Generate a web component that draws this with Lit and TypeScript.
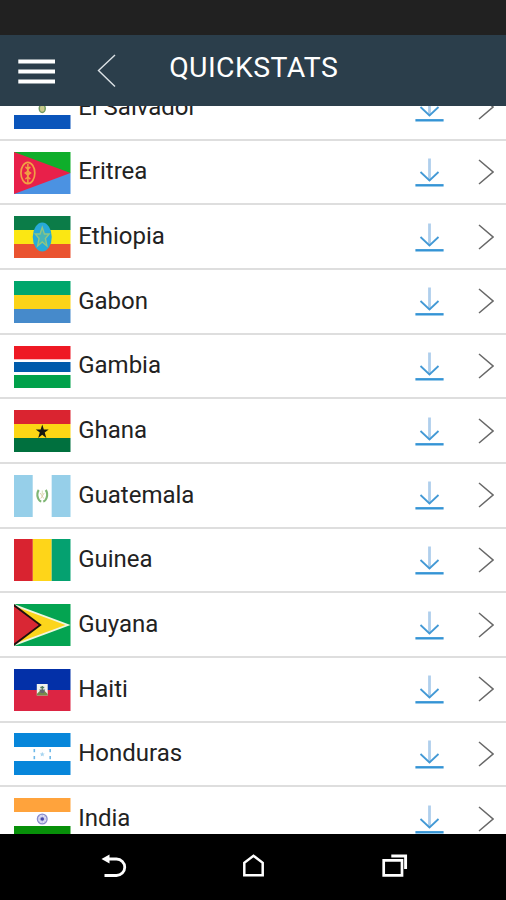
import { LitElement, html, css, svg } from "lit";
import { customElement, property } from "lit/decorators.js";

const r = (x: number, y: number, w: number, h: number, c: string) =>
  svg`<rect x=${x} y=${y} width=${w} height=${h} fill=${c}></rect>`;
const bands = (a: string, b: string, c: string) => svg`${r(0, 0, 57, 14, a)}${r(0, 14, 57, 14, b)}${r(0, 28, 57, 14, c)}`;
const pales = (a: string, b: string, c: string) => svg`${r(0, 0, 19, 42, a)}${r(19, 0, 19, 42, b)}${r(38, 0, 19, 42, c)}`;

const countries = [
  { name: "El Salvador", flag: svg`${bands("#0a55bb", "#fff", "#0a55bb")}
    <ellipse cx="28.5" cy="21.5" rx="3" ry="4" fill="#c9c98a" stroke="#729a62" stroke-width="1.5"></ellipse>` },
  { name: "Eritrea", flag: svg`${r(0, 0, 57, 21, "#0fae2b")}${r(0, 21, 57, 21, "#4b92e2")}
    <path d="M0 0L57 21L0 42Z" fill="#e8204a"></path>
    <g fill="none" stroke="#f2a044" stroke-width="1.7"><ellipse cx="14" cy="21" rx="7" ry="10.7"></ellipse>
    <path d="M14 12v19M11.5 15q5 3 0 6q5 3 0 6M16.5 15q-5 3 0 6q-5 3 0 6" stroke-width="1.5"></path></g>` },
  { name: "Ethiopia", flag: svg`${bands("#0b7c48", "#fbe713", "#ea5330")}
    <ellipse cx="28.5" cy="21" rx="9.6" ry="14.5" fill="#27aad8"></ellipse>
    <path d="M28.5 11.5L30.7 18H35.5L31.7 22.5L33.2 30L28.5 26L23.8 30L25.3 22.5L21.5 18H26.3Z" fill="#48b6b5" stroke="#8fc583" stroke-width="1.4"></path>` },
  { name: "Gabon", flag: bands("#00a66c", "#fbd318", "#468acb") },
  { name: "Gambia", flag: svg`${r(0, 0, 57, 42, "#fff")}${r(0, 0, 57, 13.3, "#ee1924")}${r(0, 16, 57, 10, "#005bab")}${r(0, 29, 57, 13, "#00a14a")}` },
  { name: "Ghana", flag: svg`${bands("#da2430", "#fcd615", "#00703e")}
    <path d="M28.5 14.5L30.1 19.5H35L31 22.5L32.6 28L28.5 24.8L24.4 28L26 22.5L22 19.5H26.9Z" fill="#161910"></path>` },
  { name: "Guatemala", flag: svg`${pales("#96cfe9", "#fff", "#96cfe9")}
    <g fill="none"><path d="M25 15q-2.5 3.5-.8 8q1 3 3.3 3.5M32 15q2.5 3.5.8 8q-1 3-3.3 3.5" stroke="#7fb674" stroke-width="2.2"></path>
    <path d="M26.5 18l3.5 5.5M30.5 18l-3.5 5.5" stroke="#dccfae"></path><path d="M28.5 15.5v4" stroke="#d5dfb2"></path></g>` },
  { name: "Guinea", flag: pales("#d92330", "#fed519", "#05a170") },
  { name: "Guyana", flag: svg`${r(0, 0, 57, 42, "#04a451")}<path d="M0 0L57 21L0 42Z" fill="#eff6df"></path>
    <path d="M0 2L52 21L0 40Z" fill="#fcd51c"></path><path d="M0 0L28 21L0 42Z" fill="#20100e"></path><path d="M0 2.5L25 21L0 39.5Z" fill="#d92734"></path>` },
  { name: "Haiti", flag: svg`${r(0, 0, 57, 21, "#0330a8")}${r(0, 21, 57, 21, "#dc2543")}${r(23, 15, 11, 11.5, "#f1f2ed")}
    <path d="M23 25l3-3h5l3 3v1.5H23Z" fill="#758b4b"></path><path d="M25.5 20.5h6L30 24h-3Z" fill="#666474"></path>
    <path d="M28.5 17v5M26.5 18.5h4" stroke="#4f7960" stroke-width="1.3"></path>` },
  { name: "Honduras", flag: svg`${bands("#0786da", "#fff", "#0786da")}
    <g fill="#7ec0eb">${r(19.7, 16, 1.6, 3.2, "#6db8e8")}${r(19.7, 23, 1.6, 3.2, "#6db8e8")}${r(35.7, 16, 1.6, 3.2, "#6db8e8")}${r(35.7, 23, 1.6, 3.2, "#6db8e8")}
    <path d="M28.5 18.8l.8 1.6 1.7.2-1.3 1.1.4 1.7-1.6-.9-1.6.9.4-1.7-1.3-1.1 1.7-.2Z" fill="#a8d5f0"></path></g>` },
  { name: "India", flag: svg`${bands("#ffa33c", "#fff", "#079009")}
    <circle cx="28.5" cy="21" r="4.9" fill="#dedff2" stroke="#8c8dcc" stroke-width="1.3"></circle>
    <path d="M28.5 17v8M24.5 21h8M25.7 18.2l5.6 5.6M31.3 18.2l-5.6 5.6" stroke="#a9a9dc" stroke-width=".6"></path>
    <circle cx="28.5" cy="21" r="1.8" fill="#4648aa"></circle>` },
];

@customElement("country-row")
class CountryRow extends LitElement {
  @property({ attribute: false }) country!: (typeof countries)[number];
  static styles = css`
    :host { display: flex; align-items: flex-start; box-sizing: border-box; height: 64.67px;
      padding: 10.9px 12.4px 0 14.3px; border-bottom: 2px solid #dedede; background: #fff; }
    svg { display: block; flex: none; }
    .flag { width: 56.5px; height: 42px; }
    .name { flex: 1; margin-left: 7.4px; font-size: 24px; line-height: 28px; margin-top: 5.9px; color: #222; white-space: nowrap; }
    .download { width: 29px; height: 30px; margin: 6.6px 33.6px 0 0; }
    .chevron { width: 16px; height: 28px; margin-top: 6.6px; }
  `;
  render() {
    return html`
      <svg class="flag" viewBox="0 0 57 42" preserveAspectRatio="none">${this.country.flag}</svg>
      <span class="name">${this.country.name}</span>
      <svg class="download" viewBox="0 0 29 30" fill="none">
        <path d="M14.5 .5V22.5" stroke="#afcfec" stroke-width="2.8"></path>
        <path d="M5.5 14L14.5 22.5L23.5 14" stroke="#4399d5" stroke-width="1.8"></path>
        <path d="M.4 27.3H28.6" stroke="#3494d5" stroke-width="2.4"></path>
      </svg>
      <svg class="chevron" viewBox="0 0 16 28" fill="none"><path d="M1 2L15 14L1 26" stroke="#686868" stroke-width="1.5"></path></svg>`;
  }
}

@customElement("app-root")
class AppRoot extends LitElement {
  static styles = css`
    :host { display: flex; flex-direction: column; height: 900px; overflow: hidden; background: #fff; font-family: Roboto, "Liberation Sans", sans-serif; }
    svg { display: block; }
    .status { flex: none; height: 35px; background: #212121; }
    .header { flex: none; box-sizing: border-box; display: grid; grid-template-columns: 80px 89.2px 1fr; height: 71px; background: #2b3e4b; align-items: start; }
    .menu { width: 38px; height: 28px; margin: 22px 0 0 18px; }
    .back { width: 20px; height: 34px; margin: 19px 0 0 17px; }
    .title { margin: 0; padding-top: 16px; font-size: 28.4px; line-height: 34px; font-weight: 400; letter-spacing: .4px; color: #fff; }
    .list { flex: 1; min-height: 0; overflow: hidden; }
    .rows { margin-top: -30px; }
    .nav { flex: none; box-sizing: border-box; height: 66.5px; padding: 19.8px 98.4px 0 100px; background: #000; display: flex; justify-content: space-between; }
    .nav svg { width: 28px; height: 28px; }
  `;
  render() {
    return html`
      <div class="status"></div>
      <header class="header">
        <svg class="menu" viewBox="0 0 38 28"><path d="M.3 4.4H37M.3 14.4H37M.3 24.5H37" stroke="#fff" stroke-width="4"></path></svg>
        <svg class="back" viewBox="0 0 20 34" fill="none"><path d="M18 1L1.5 16.5L18 32.5" stroke="#dce2e6" stroke-width="1.4"></path></svg>
        <h1 class="title">QUICKSTATS</h1>
      </header>
      <main class="list"><div class="rows">
        ${countries.map((c) => html`<country-row .country=${c}></country-row>`)}
      </div></main>
      <nav class="nav">
        <svg viewBox="0 0 28 28" fill="none"><path d="M1.5 6L9.5 1.5V10.5Z" fill="#fff"></path><path d="M8 6H16.5A8 8 0 0 1 16.5 22.5H4.5" stroke="#fff" stroke-width="2.8"></path></svg>
        <svg viewBox="0 0 28 28" fill="none"><path d="M4.3 22.3V9.8L13.5 2.8L22.7 9.8V22.3Z" stroke="#fff" stroke-width="2.5"></path></svg>
        <svg viewBox="0 0 28 28" fill="none"><path d="M3.7 7.3H22V22.3H3.7Z" stroke="#fff" stroke-width="2.7"></path><path d="M11.3 3H25.6V16" stroke="#fff" stroke-width="2.9"></path></svg>
      </nav>`;
  }
}
